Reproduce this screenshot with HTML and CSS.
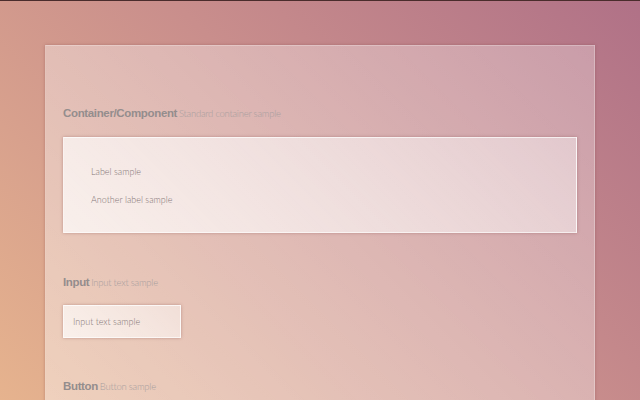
FILE: index.html
```html
<!DOCTYPE html>
<html>
<head>
<meta charset="utf-8">
<link rel="stylesheet" href="styles.css">
</head>
<body>
<div class="page">
  <div class="panel">
    <section class="section section-first">
      <h2 class="heading">Container/Component <span class="sub">Standard container sample</span></h2>
      <div class="box">
        <div class="label">Label sample</div>
        <div class="label">Another label sample</div>
      </div>
    </section>
    <section class="section">
      <h2 class="heading">Input <span class="sub">Input text sample</span></h2>
      <div class="input">Input text sample</div>
    </section>
    <section class="section section-last">
      <h2 class="heading">Button <span class="sub">Button sample</span></h2>
    </section>
  </div>
</div>
</body>
</html>
```
FILE: styles.css
```css
html, body {
  margin: 0;
  padding: 0;
  height: 100%;
  overflow: hidden;
}
body {
  background: linear-gradient(225deg, #b07187 0%, #c98e8c 45%, #e6b38e 100%);
  border-top: 1px solid #4a2c2c;
  box-sizing: border-box;
  font-family: "Lato", "Liberation Sans", sans-serif;
}
.page {
  padding: 44px 45px 0 45px;
}
.panel {
  width: 550px;
  height: 400px;
  box-sizing: border-box;
  background: linear-gradient(225deg, rgba(255,255,255,0.28), rgba(255,255,255,0.42));
  border: 1px solid rgba(255,255,255,0.18);
  box-shadow: 0 0 3px rgba(120,60,60,0.35);
  padding: 0 17px;
}
.section {
  margin-top: 41px;
}
.section-first {
  margin-top: 59px;
}
.section-last {
  margin-top: 40px;
}
.heading {
  margin: 0;
  font-family: "Liberation Sans", Arial, sans-serif;
  font-weight: bold;
  font-size: 11.5px;
  letter-spacing: -0.35px;
  line-height: 16px;
  color: #948d8d;
}
.sub {
  font-family: "Lato", sans-serif;
  font-weight: 300;
  font-size: 9.5px;
  letter-spacing: -0.25px;
  margin-left: -1px;
  color: #a89e9e;
}
.box {
  margin-top: 15px;
  height: 96px;
  box-sizing: border-box;
  background: linear-gradient(225deg, rgba(255,255,255,0.4), rgba(255,255,255,0.72));
  border: 1px solid rgba(255,255,255,0.65);
  box-shadow: 0 0 3px rgba(130,70,70,0.4);
  padding: 27px 27px 0;
  display: flex;
  flex-direction: column;
  gap: 14px;
}
.label {
  font-size: 9px;
  font-weight: 300;
  line-height: 14px;
  color: #847676;
}
.input {
  margin-top: 14px;
  width: 118px;
  height: 33px;
  box-sizing: border-box;
  background: linear-gradient(225deg, rgba(255,255,255,0.45), rgba(255,255,255,0.7));
  border: 1px solid rgba(255,255,255,0.7);
  box-shadow: 0 0 3px rgba(130,70,70,0.4);
  padding: 0 9px;
  display: flex;
  align-items: center;
  font-size: 9px;
  font-weight: 300;
  color: #847676;
}
```
